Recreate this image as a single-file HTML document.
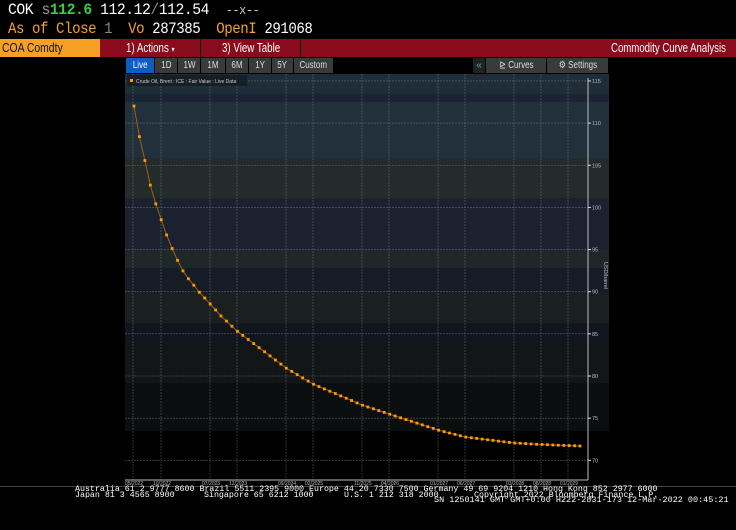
<!DOCTYPE html>
<html><head><meta charset="utf-8"><style>
*{margin:0;padding:0;box-sizing:border-box}
body{width:736px;height:530px;background:#000;overflow:hidden;position:relative;font-family:"Liberation Sans",sans-serif}
.a{position:absolute;white-space:nowrap}
.m{font-family:"Liberation Mono",monospace}
.f{position:absolute;white-space:nowrap;font-family:"Liberation Mono",monospace;font-size:8.3px;color:#fff;line-height:8px}
.tab{position:absolute;top:58px;height:15px;background:#3a3a3a;color:#ddd;font-size:10px;line-height:15px;text-align:center}
.tab span{display:inline-block;transform:scaleX(.8)}
</style></head><body>
<div class="a m" style="left:8px;top:1px;font-size:16px;color:#fff;letter-spacing:-0.5px;transform:scaleX(.92);transform-origin:left">COK <span style="color:#999">s</span><b style="color:#3ec94a">112.6</b> 112.12<span style="color:#888">/</span>112.54 &nbsp;<span style="color:#ccc;font-size:13px">--x--</span></div>
<div class="a m" style="left:8px;top:20px;font-size:16px;color:#f5a030;letter-spacing:-0.5px;transform:scaleX(.88);transform-origin:left">As of Close <span style="color:#888">1</span> &nbsp;Vo <span style="color:#fff">287385</span> &nbsp;OpenI <span style="color:#fff">291068</span></div>
<div class="a" style="left:0;top:39px;width:100px;height:18px;background:#f6a024"></div>
<div class="a" style="left:2px;top:40px;font-size:13px;color:#111;transform:scaleX(.8);transform-origin:left">COA Comdty</div>
<div class="a" style="left:100px;top:39px;width:636px;height:18px;background:#8a0b1b"></div>
<div class="a" style="left:200px;top:39px;width:1px;height:18px;background:#000"></div>
<div class="a" style="left:300px;top:39px;width:1px;height:18px;background:#000"></div>
<div class="a" style="left:126px;top:40px;font-size:13px;color:#fff;transform:scaleX(.75);transform-origin:left">1) Actions <span style="font-size:8px">▾</span></div>
<div class="a" style="left:222px;top:40px;font-size:13px;color:#fff;transform:scaleX(.75);transform-origin:left">3) View Table</div>
<div class="a" style="left:611px;top:40px;font-size:13px;color:#fff;transform:scaleX(.74);transform-origin:left">Commodity Curve Analysis</div>
<div class="tab" style="left:126px;width:28px;background:#0b5cc4;color:#fff"><span>Live</span></div>
<div class="tab" style="left:155px;width:22px"><span>1D</span></div>
<div class="tab" style="left:178px;width:22px"><span>1W</span></div>
<div class="tab" style="left:201px;width:24px"><span>1M</span></div>
<div class="tab" style="left:226px;width:22px"><span>6M</span></div>
<div class="tab" style="left:249px;width:22px"><span>1Y</span></div>
<div class="tab" style="left:272px;width:21px"><span>5Y</span></div>
<div class="tab" style="left:294px;width:39px"><span>Custom</span></div>
<div class="a" style="left:473px;top:58px;width:12px;height:15px;background:#222;color:#5ab;font-size:10px;line-height:15px;text-align:center">«</div>
<div class="tab" style="left:486px;width:60px"><span>⊵ Curves</span></div>
<div class="tab" style="left:547px;width:61px"><span>⚙ Settings</span></div>
<svg class="a" style="left:0;top:0" width="736" height="530">
<g id="bands">
<rect x="125" y="74" width="484" height="412" fill="#000"/>
<rect x="125" y="74" width="484" height="20" fill="#1f2d38"/>
<rect x="125" y="94" width="484" height="8" fill="#1b2434"/>
<rect x="125" y="102" width="484" height="56" fill="#22303b"/>
<rect x="125" y="158" width="484" height="40" fill="#232b2b"/>
<rect x="125" y="198" width="484" height="52" fill="#1a2230"/>
<rect x="125" y="250" width="484" height="18" fill="#1f2828"/>
<rect x="125" y="268" width="484" height="24" fill="#161c26"/>
<rect x="125" y="292" width="484" height="31" fill="#1a2020"/>
<rect x="125" y="323" width="484" height="20" fill="#11161e"/>
<rect x="125" y="343" width="484" height="40" fill="#121616"/>
<rect x="125" y="383" width="484" height="48" fill="#0b0e0f"/>
<rect x="125" y="431" width="464" height="49" fill="#000"/>
</g>
<g id="grid" stroke="#8a8f95" stroke-width="0.6" stroke-dasharray="2,1" opacity="0.6"></g>
<line x1="588" y1="78" x2="588" y2="480" stroke="#bbb" stroke-width="1"/>
<line x1="125" y1="480" x2="588" y2="480" stroke="#bbb" stroke-width="1"/>
<g id="yl" font-family="Liberation Sans" font-size="5.5" fill="#bbb"></g>
<g id="xl" font-family="Liberation Sans" font-size="5" fill="#bbb"></g>
<text transform="translate(604,262) rotate(90)" font-size="5.5" fill="#bbb" font-family="Liberation Sans">USD/barrel</text>
<rect x="127" y="75" width="120" height="11" fill="#131b22" opacity="0.8"/>
<rect x="130" y="79" width="3" height="3" fill="#f90"/>
<text x="136" y="83" font-size="5" fill="#ccc" font-family="Liberation Sans">Crude Oil, Brent : ICE : Fair Value : Live Data</text>
<g id="curve"></g>
<line x1="0" y1="486.5" x2="736" y2="486.5" stroke="#444" stroke-width="1"/>
</svg>
<div class="f" style="left:75px;top:486px">Australia 61 2 9777 8600 Brazil 5511 2395 9000 Europe 44 20 7330 7500 Germany 49 69 9204 1210 Hong Kong 852 2977 6000</div>
<div class="f" style="left:75px;top:492px">Japan 81 3 4565 8900</div>
<div class="f" style="left:204px;top:492px">Singapore 65 6212 1000</div>
<div class="f" style="left:344px;top:492px">U.S. 1 212 318 2000</div>
<div class="f" style="left:474px;top:492px">Copyright 2022 Bloomberg Finance L.P.</div>
<div class="f" style="left:434px;top:497px;transform:scaleX(1.02);transform-origin:left">SN 1250141 GMT GMT+0:00 H222-2831-173 12-Mar-2022 00:45:21</div>
<script>
var ns="http://www.w3.org/2000/svg";
function el(p,t,a,txt){var e=document.createElementNS(ns,t);for(var k in a)e.setAttribute(k,a[k]);if(txt)e.textContent=txt;document.getElementById(p).appendChild(e);}
for(var v=70;v<=115;v+=5){var y=460.3-(v-70)*8.43;el("grid","line",{x1:125,y1:y,x2:588,y2:y});el("yl","line",{x1:588,y1:y,x2:591,y2:y,stroke:"#ddd"});el("yl","text",{x:592,y:y+2},String(v));}
var xs=[[133,"05/2022"],[161,"10/2022"],[210,"07/2023"],[237,"12/2023"],[286,"09/2024"],[313,"02/2025"],[362,"11/2025"],[389,"04/2026"],[438,"01/2027"],[465,"06/2027"],[514,"03/2028"],[541,"08/2028"],[568,"01/2029"]];
xs.forEach(function(a){el("grid","line",{x1:a[0],y1:74,x2:a[0],y2:480});el("xl","text",{x:a[0]-8,y:485},a[1]);});
var k=[[134,106],[139.5,137],[145,161],[150,184],[155.7,203.7],[161.3,220],[167,236],[172.3,249],[177.7,260.7],[183,271],[188.3,278.7],[193.7,285],[199,292],[204.7,298],[210,303.7],[220.7,315.7],[237,331],[286,368],[313,384],[362,405],[389,414],[438,430],[465,437],[514,443],[541,444.5],[580,446]];
function f(x){for(var i=0;i<k.length-1;i++){if(x<=k[i+1][0]){var t=(x-k[i][0])/(k[i+1][0]-k[i][0]);return k[i][1]+t*(k[i+1][1]-k[i][1]);}}return k[k.length-1][1];}
var pts=[];for(var m=0;m<=82;m++){var x=134+m*5.44;if(x>580)x=580;pts.push(x.toFixed(1)+","+f(x).toFixed(1));}
el("curve","polyline",{points:pts.join(" "),fill:"none",stroke:"#a06010","stroke-width":1});
pts.forEach(function(p){var q=p.split(",");el("curve","rect",{x:q[0]-1.4,y:q[1]-1.4,width:2.8,height:2.8,fill:"#ff9a00"});});
</script>
</body></html>
